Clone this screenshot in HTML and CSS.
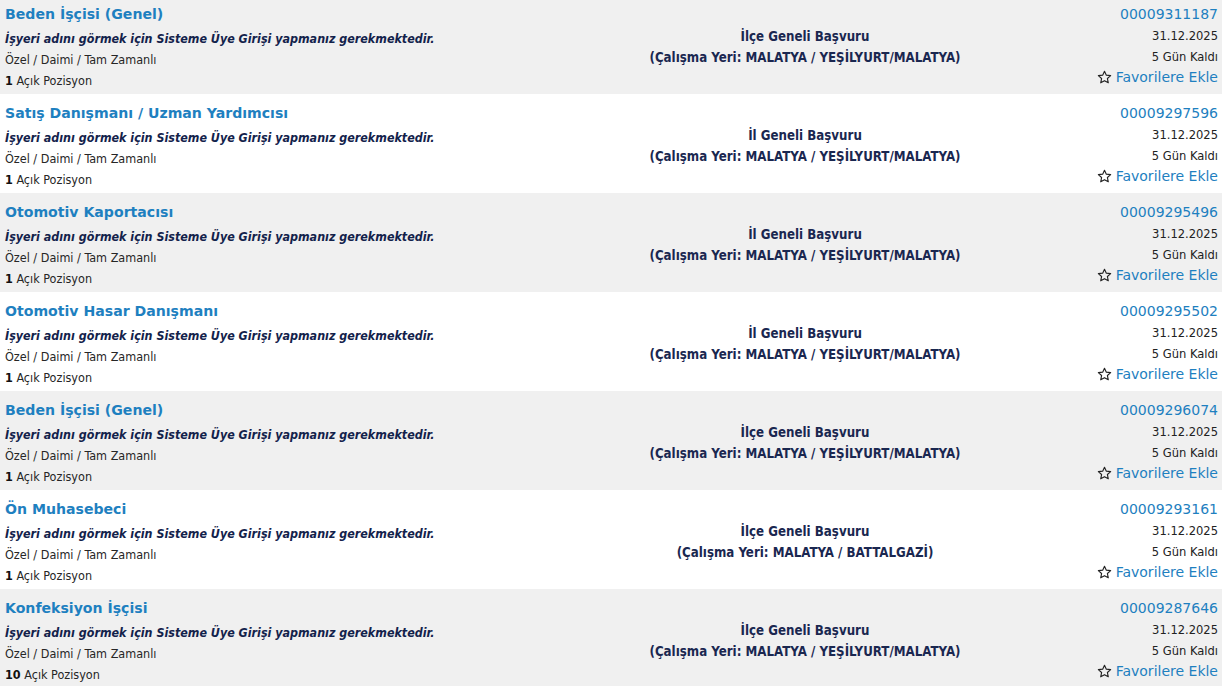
FILE: index.html
```html
<!DOCTYPE html>
<html lang="tr">
<head>
<meta charset="utf-8">
<title>İş İlanları</title>
<link rel="stylesheet" href="styles.css">
</head>
<body>
<div class="list">
  <div class="row grey">
    <div class="col-left">
      <a class="title" href="#">Beden İşçisi (Genel)</a>
      <div class="employer">İşyeri adını görmek için Sisteme Üye Girişi yapmanız gerekmektedir.</div>
      <div class="type">Özel / Daimi / Tam Zamanlı</div>
      <div class="count"><b>1</b> Açık Pozisyon</div>
    </div>
    <div class="col-mid">
      <div>İlçe Geneli Başvuru</div>
      <div>(Çalışma Yeri: MALATYA / YEŞİLYURT/MALATYA)</div>
    </div>
    <div class="col-right">
      <a class="code" href="#">00009311187</a>
      <div>31.12.2025</div>
      <div>5 Gün Kaldı</div>
      <a class="fav" href="#"><svg class="star" viewBox="0 0 16 16"><path d="M8 1.3l1.95 4.2 4.6.5-3.45 3.1.95 4.55L8 11.35 3.95 13.65 4.9 9.1 1.45 6l4.6-.5z"/></svg>Favorilere Ekle</a>
    </div>
  </div>

  <div class="row">
    <div class="col-left">
      <a class="title" href="#">Satış Danışmanı / Uzman Yardımcısı</a>
      <div class="employer">İşyeri adını görmek için Sisteme Üye Girişi yapmanız gerekmektedir.</div>
      <div class="type">Özel / Daimi / Tam Zamanlı</div>
      <div class="count"><b>1</b> Açık Pozisyon</div>
    </div>
    <div class="col-mid">
      <div>İl Geneli Başvuru</div>
      <div>(Çalışma Yeri: MALATYA / YEŞİLYURT/MALATYA)</div>
    </div>
    <div class="col-right">
      <a class="code" href="#">00009297596</a>
      <div>31.12.2025</div>
      <div>5 Gün Kaldı</div>
      <a class="fav" href="#"><svg class="star" viewBox="0 0 16 16"><path d="M8 1.3l1.95 4.2 4.6.5-3.45 3.1.95 4.55L8 11.35 3.95 13.65 4.9 9.1 1.45 6l4.6-.5z"/></svg>Favorilere Ekle</a>
    </div>
  </div>

  <div class="row grey">
    <div class="col-left">
      <a class="title" href="#">Otomotiv Kaportacısı</a>
      <div class="employer">İşyeri adını görmek için Sisteme Üye Girişi yapmanız gerekmektedir.</div>
      <div class="type">Özel / Daimi / Tam Zamanlı</div>
      <div class="count"><b>1</b> Açık Pozisyon</div>
    </div>
    <div class="col-mid">
      <div>İl Geneli Başvuru</div>
      <div>(Çalışma Yeri: MALATYA / YEŞİLYURT/MALATYA)</div>
    </div>
    <div class="col-right">
      <a class="code" href="#">00009295496</a>
      <div>31.12.2025</div>
      <div>5 Gün Kaldı</div>
      <a class="fav" href="#"><svg class="star" viewBox="0 0 16 16"><path d="M8 1.3l1.95 4.2 4.6.5-3.45 3.1.95 4.55L8 11.35 3.95 13.65 4.9 9.1 1.45 6l4.6-.5z"/></svg>Favorilere Ekle</a>
    </div>
  </div>

  <div class="row">
    <div class="col-left">
      <a class="title" href="#">Otomotiv Hasar Danışmanı</a>
      <div class="employer">İşyeri adını görmek için Sisteme Üye Girişi yapmanız gerekmektedir.</div>
      <div class="type">Özel / Daimi / Tam Zamanlı</div>
      <div class="count"><b>1</b> Açık Pozisyon</div>
    </div>
    <div class="col-mid">
      <div>İl Geneli Başvuru</div>
      <div>(Çalışma Yeri: MALATYA / YEŞİLYURT/MALATYA)</div>
    </div>
    <div class="col-right">
      <a class="code" href="#">00009295502</a>
      <div>31.12.2025</div>
      <div>5 Gün Kaldı</div>
      <a class="fav" href="#"><svg class="star" viewBox="0 0 16 16"><path d="M8 1.3l1.95 4.2 4.6.5-3.45 3.1.95 4.55L8 11.35 3.95 13.65 4.9 9.1 1.45 6l4.6-.5z"/></svg>Favorilere Ekle</a>
    </div>
  </div>

  <div class="row grey">
    <div class="col-left">
      <a class="title" href="#">Beden İşçisi (Genel)</a>
      <div class="employer">İşyeri adını görmek için Sisteme Üye Girişi yapmanız gerekmektedir.</div>
      <div class="type">Özel / Daimi / Tam Zamanlı</div>
      <div class="count"><b>1</b> Açık Pozisyon</div>
    </div>
    <div class="col-mid">
      <div>İlçe Geneli Başvuru</div>
      <div>(Çalışma Yeri: MALATYA / YEŞİLYURT/MALATYA)</div>
    </div>
    <div class="col-right">
      <a class="code" href="#">00009296074</a>
      <div>31.12.2025</div>
      <div>5 Gün Kaldı</div>
      <a class="fav" href="#"><svg class="star" viewBox="0 0 16 16"><path d="M8 1.3l1.95 4.2 4.6.5-3.45 3.1.95 4.55L8 11.35 3.95 13.65 4.9 9.1 1.45 6l4.6-.5z"/></svg>Favorilere Ekle</a>
    </div>
  </div>

  <div class="row">
    <div class="col-left">
      <a class="title" href="#">Ön Muhasebeci</a>
      <div class="employer">İşyeri adını görmek için Sisteme Üye Girişi yapmanız gerekmektedir.</div>
      <div class="type">Özel / Daimi / Tam Zamanlı</div>
      <div class="count"><b>1</b> Açık Pozisyon</div>
    </div>
    <div class="col-mid">
      <div>İlçe Geneli Başvuru</div>
      <div>(Çalışma Yeri: MALATYA / BATTALGAZİ)</div>
    </div>
    <div class="col-right">
      <a class="code" href="#">00009293161</a>
      <div>31.12.2025</div>
      <div>5 Gün Kaldı</div>
      <a class="fav" href="#"><svg class="star" viewBox="0 0 16 16"><path d="M8 1.3l1.95 4.2 4.6.5-3.45 3.1.95 4.55L8 11.35 3.95 13.65 4.9 9.1 1.45 6l4.6-.5z"/></svg>Favorilere Ekle</a>
    </div>
  </div>

  <div class="row grey">
    <div class="col-left">
      <a class="title" href="#">Konfeksiyon İşçisi</a>
      <div class="employer">İşyeri adını görmek için Sisteme Üye Girişi yapmanız gerekmektedir.</div>
      <div class="type">Özel / Daimi / Tam Zamanlı</div>
      <div class="count"><b>10</b> Açık Pozisyon</div>
    </div>
    <div class="col-mid">
      <div>İlçe Geneli Başvuru</div>
      <div>(Çalışma Yeri: MALATYA / YEŞİLYURT/MALATYA)</div>
    </div>
    <div class="col-right">
      <a class="code" href="#">00009287646</a>
      <div>31.12.2025</div>
      <div>5 Gün Kaldı</div>
      <a class="fav" href="#"><svg class="star" viewBox="0 0 16 16"><path d="M8 1.3l1.95 4.2 4.6.5-3.45 3.1.95 4.55L8 11.35 3.95 13.65 4.9 9.1 1.45 6l4.6-.5z"/></svg>Favorilere Ekle</a>
    </div>
  </div>
</div>
</body>
</html>
```

FILE: styles.css
```css
html, body {
  margin: 0;
  padding: 0;
  background: #ffffff;
  overflow: hidden;
}
body {
  font-family: "DejaVu Sans Condensed", "DejaVu Sans", sans-serif;
  font-size: 12.5px;
  color: #1f1f1f;
}
.list {
  width: 1222px;
  margin-top: -5px;
}
.row {
  display: grid;
  grid-template-columns: 555px 500px 1fr;
  height: 99px;
  box-sizing: border-box;
  background: #ffffff;
}
.row.grey {
  background: #f0f0f0;
}
a {
  text-decoration: none;
}
.col-left {
  padding: 7px 0 0 5px;
  display: flex;
  flex-direction: column;
  align-items: flex-start;
}
.title {
  font-family: "DejaVu Sans", sans-serif;
  font-weight: bold;
  font-size: 14.1px;
  line-height: 25px;
  color: #1e80c0;
}
.employer {
  margin-top: 1px;
  font-weight: bold;
  font-style: italic;
  font-size: 12.4px;
  line-height: 21px;
  color: #13224b;
}
.type, .count {
  line-height: 21px;
  color: #262626;
}
.count b {
  color: #111;
}
.col-mid {
  padding-top: 31px;
  text-align: center;
  font-weight: bold;
  font-size: 13.2px;
  line-height: 21px;
  color: #1a2750;
}
.col-right {
  padding: 9px 4px 0 0;
  display: flex;
  flex-direction: column;
  align-items: flex-end;
  font-size: 12.8px;
  line-height: 21px;
  color: #222;
}
.code {
  font-family: "DejaVu Sans", sans-serif;
  font-size: 14px;
  color: #1e80c0;
}
.fav {
  display: flex;
  align-items: center;
  font-family: "DejaVu Sans", sans-serif;
  font-size: 14px;
  color: #1e80c0;
}
.star {
  width: 15px;
  height: 15px;
  margin-right: 4px;
  fill: none;
  stroke: #222;
  stroke-width: 1.2;
  stroke-linejoin: round;
}
```
